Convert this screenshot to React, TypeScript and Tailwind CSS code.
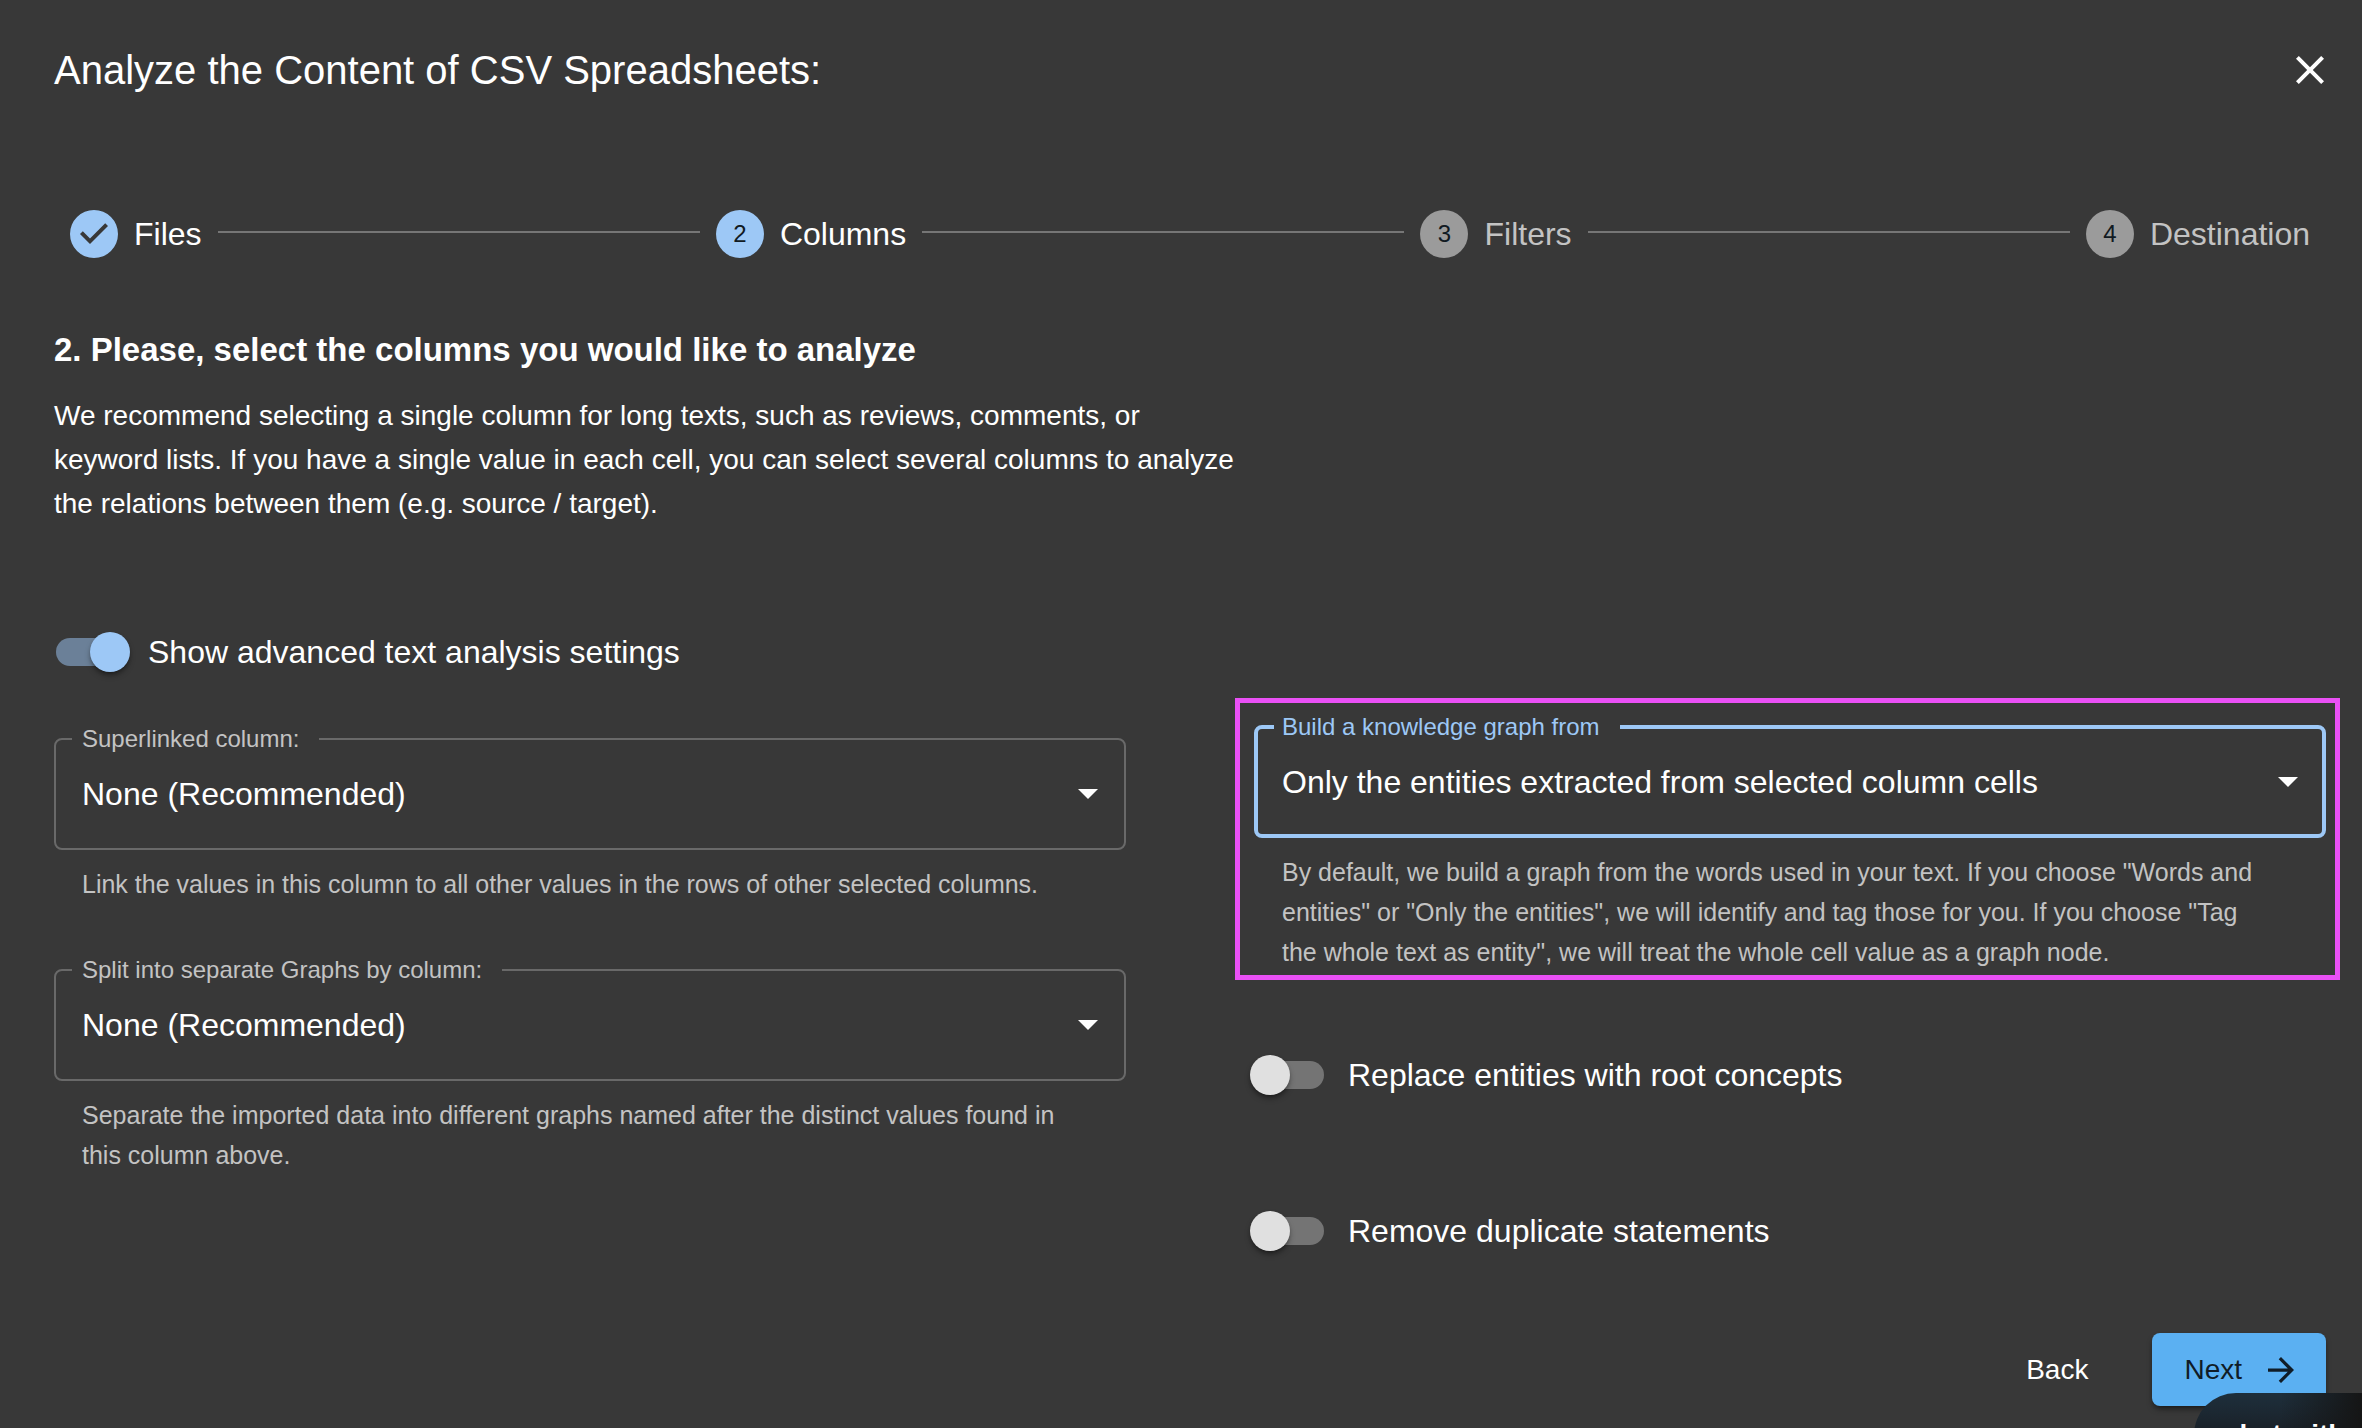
import React, { useState } from "react";

type StepState = "done" | "active" | "pending";

const steps: { label: string; state: StepState }[] = [
  { label: "Files", state: "done" },
  { label: "Columns", state: "active" },
  { label: "Filters", state: "pending" },
  { label: "Destination", state: "pending" },
];

function StepBadge({ index, state }: { index: number; state: StepState }) {
  if (state === "done") {
    return (
      <svg viewBox="0 0 24 24" className="size-12 shrink-0" fill="#9dc8f6" aria-hidden="true">
        <path d="M12 0a12 12 0 1 0 0 24 12 12 0 0 0 0-24zm-2 17l-5-5 1.4-1.4 3.6 3.6 7.6-7.6L19 8l-9 9z" />
      </svg>
    );
  }
  return (
    <span
      className={
        "flex size-12 shrink-0 items-center justify-center rounded-full text-2xl text-[#111a22] " +
        (state === "active" ? "bg-[#9dc8f6]" : "bg-[#9b9b9b]")
      }
    >
      {index}
    </span>
  );
}

function Stepper() {
  return (
    <ol className="flex items-center px-4">
      {steps.map((step, i) => (
        <React.Fragment key={step.label}>
          {i > 0 && <li aria-hidden="true" className="mx-4 mb-1 h-0.5 flex-1 bg-[#767676]" />}
          <li className="flex items-center gap-4" aria-current={step.state === "active" ? "step" : undefined}>
            <StepBadge index={i + 1} state={step.state} />
            <span className={"text-[32px] leading-12 " + (step.state === "pending" ? "text-[#c3c3c3]" : "text-white")}>
              {step.label}
            </span>
          </li>
        </React.Fragment>
      ))}
    </ol>
  );
}

function Toggle({ id, label, initial = false }: { id: string; label: string; initial?: boolean }) {
  const [on, setOn] = useState(initial);
  return (
    <div className="-ml-1 flex h-12 items-center">
      <span className="relative h-10 w-20 shrink-0">
        <input
          id={id}
          type="checkbox"
          role="switch"
          checked={on}
          onChange={(e) => setOn(e.target.checked)}
          className="peer absolute inset-0 z-10 m-0 cursor-pointer appearance-none"
        />
        <span className="absolute inset-x-1.5 top-1.5 h-7 rounded-full bg-[#747474] peer-checked:bg-[#6b8098]" />
        <span className="absolute left-0 top-0 size-10 rounded-full bg-[#e0e0e0] shadow-md shadow-black/40 peer-checked:left-10 peer-checked:bg-[#9dc8f6]" />
      </span>
      <label htmlFor={id} className="pl-4.5 text-[32px] leading-12 text-white">
        {label}
      </label>
    </div>
  );
}

function SelectField({
  id,
  label,
  value,
  help,
  focused = false,
}: {
  id: string;
  label: string;
  value: string;
  help: string;
  focused?: boolean;
}) {
  return (
    <div>
      <fieldset
        className={"rounded-lg px-4 " + (focused ? "border-4 border-[#9dc8f6]" : "border-2 border-[#696969]")}
      >
        <legend className={focused ? "pl-2 pr-5" : "pl-2.5 pr-5"}>
          <label
            htmlFor={id}
            className={"block text-2xl leading-6 " + (focused ? "text-[#9dc8f6]" : "text-[#c3c3c3]")}
          >
            {label}
          </label>
        </legend>
        <div className={"relative flex items-center " + (focused ? "mb-2.5 h-[85px]" : "mb-3 h-[85px]")}>
          <select
            id={id}
            defaultValue={value}
            aria-describedby={id + "-help"}
            className={
              "h-12 w-full appearance-none bg-transparent pr-16 text-[32px] leading-12 text-white outline-none " +
              (focused ? "pl-2" : "pl-2.5")
            }
          >
            <option>{value}</option>
          </select>
          <svg
            viewBox="0 0 20 10"
            className={"pointer-events-none absolute h-2.5 w-5 " + (focused ? "right-2" : "right-2.5")}
            fill="white"
            aria-hidden="true"
          >
            <path d="M0 0h20L10 10z" />
          </svg>
        </div>
      </fieldset>
      <p id={id + "-help"} className="mt-3.5 pl-7 pr-14 text-[25px] leading-10 text-[#c3c3c3]">
        {help}
      </p>
    </div>
  );
}

export default function App() {
  return (
    <main className="relative min-h-screen overflow-hidden bg-[#383838] pb-5 pl-[54px] pr-9 pt-[46px] font-['Liberation_Sans',Arial,sans-serif] text-white">
      <header className="flex items-center justify-between">
        <h1 className="text-[40px] leading-12">Analyze the Content of CSV Spreadsheets:</h1>
        <button type="button" aria-label="Close" className="flex size-8 items-center justify-center">
          <svg viewBox="5 5 14 14" className="size-7" fill="white" aria-hidden="true">
            <path d="M19 6.41L17.59 5 12 10.59 6.41 5 5 6.41 10.59 12 5 17.59 6.41 19 12 13.41 17.59 19 19 17.59 13.41 12z" />
          </svg>
        </button>
      </header>

      <nav aria-label="Progress" className="mt-[116px]">
        <Stepper />
      </nav>

      <section className="mt-[68px]">
        <h2 className="text-[33px] font-bold leading-12">2. Please, select the columns you would like to analyze</h2>
        <p className="mt-5 max-w-[1190px] text-[28px] leading-11">
          We recommend selecting a single column for long texts, such as reviews, comments, or keyword lists. If you
          have a single value in each cell, you can select several columns to analyze the relations between them (e.g.
          source / target).
        </p>
      </section>

      <form className="mt-[102px]" onSubmit={(e) => e.preventDefault()}>
        <Toggle id="advanced" label="Show advanced text analysis settings" initial />
        <div className="grid grid-cols-2 gap-32">
          <div className="flex flex-col gap-[54px] pt-[51px]">
            <SelectField
              id="superlinked"
              label="Superlinked column:"
              value="None (Recommended)"
              help="Link the values in this column to all other values in the rows of other selected columns."
            />
            <SelectField
              id="split"
              label="Split into separate Graphs by column:"
              value="None (Recommended)"
              help="Separate the imported data into different graphs named after the distinct values found in this column above."
            />
          </div>
          <div className="flex flex-col pt-[39px]">
            <div className="relative">
              <SelectField
                id="graph-source"
                label="Build a knowledge graph from"
                value="Only the entities extracted from selected column cells"
                help={
                  'By default, we build a graph from the words used in your text. If you choose "Words and entities" or "Only the entities", we will identify and tag those for you. If you choose "Tag the whole text as entity", we will treat the whole cell value as a graph node.'
                }
                focused
              />
              <div
                aria-hidden="true"
                className="pointer-events-none absolute -bottom-2 -left-[19px] -right-3.5 -top-[17px] border-5 border-[#e950f5]"
              />
            </div>
            <div className="mt-[79px] flex flex-col gap-27">
              <Toggle id="root-concepts" label="Replace entities with root concepts" />
              <Toggle id="dedupe" label="Remove duplicate statements" />
            </div>
          </div>
        </div>
        <div className="mt-[78px] flex items-center justify-end gap-8">
          <button type="button" className="h-[73px] px-8 text-[28px] leading-11">
            Back
          </button>
          <button
            type="submit"
            className="flex h-[73px] items-center gap-[26px] rounded-lg bg-[#5bb0f2] px-8 text-[28px] leading-11 text-[#101c27] shadow-md shadow-black/40"
          >
            Next
            <svg viewBox="4 4 16 16" className="size-[26px]" fill="currentColor" aria-hidden="true">
              <path d="M12 4l-1.41 1.41L16.17 11H4v2h12.17l-5.58 5.59L12 20l8-8z" />
            </svg>
          </button>
        </div>
      </form>

      <button
        type="button"
        className="absolute -bottom-[49px] -right-20 h-[84px] w-62 rounded-full bg-[linear-gradient(to_right,transparent_35%,#151515_68%),linear-gradient(#1e2f3c,#17191d_70%)] pl-[30px] text-left text-[28px] font-bold text-white"
      >
        chat with
      </button>
    </main>
  );
}
